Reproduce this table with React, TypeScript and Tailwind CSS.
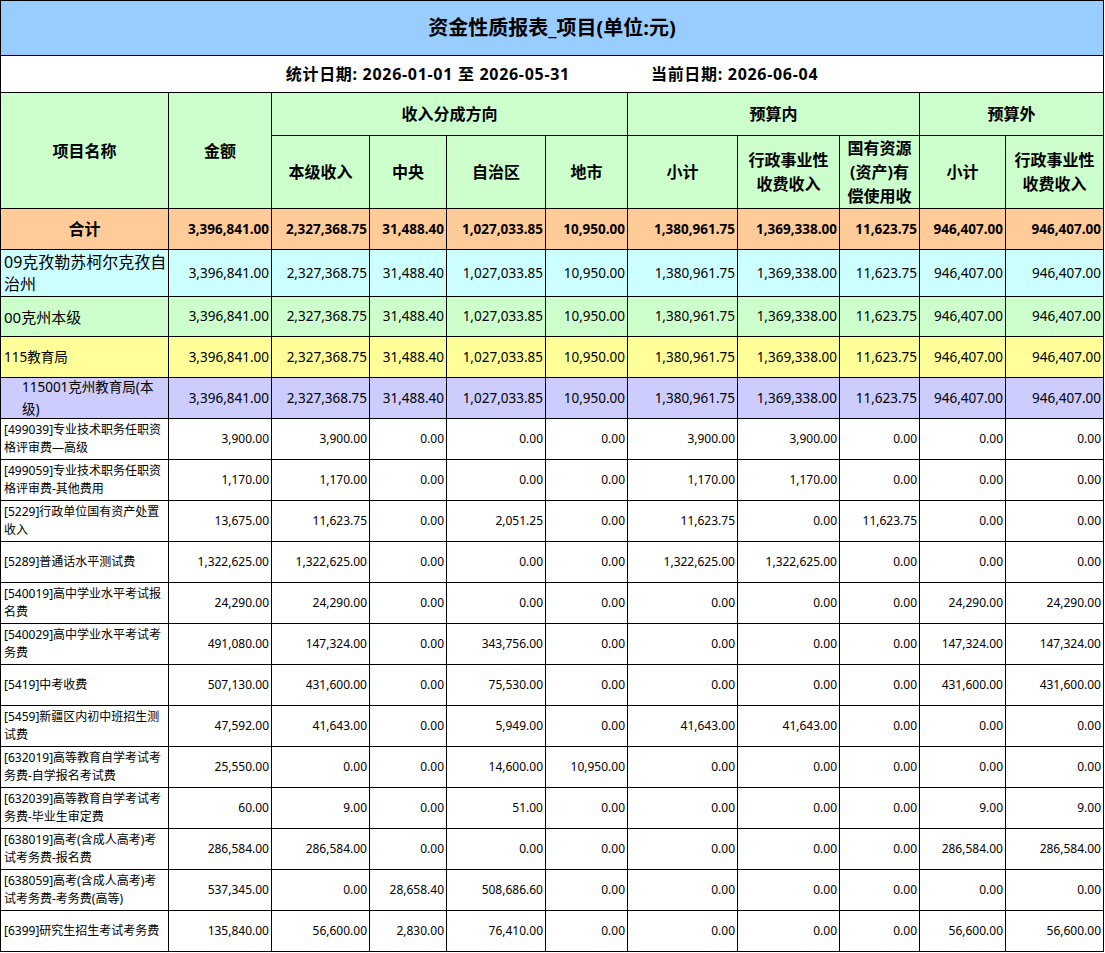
import React from "react";

type Level = {
  name: string[];
  bg: string;
  size: string;
  indent?: boolean;
};

const totals = [
  "3,396,841.00",
  "2,327,368.75",
  "31,488.40",
  "1,027,033.85",
  "10,950.00",
  "1,380,961.75",
  "1,369,338.00",
  "11,623.75",
  "946,407.00",
  "946,407.00",
];

const levels: Level[] = [
  { name: ["09克孜勒苏柯尔克孜自", "治州"], bg: "bg-[#ccffff]", size: "text-[16px]" },
  { name: ["00克州本级"], bg: "bg-[#ccffcc]", size: "text-[15px]" },
  { name: ["115教育局"], bg: "bg-[#ffff99]", size: "text-[13.5px]" },
  { name: ["115001克州教育局(本", "级)"], bg: "bg-[#ccccff]", size: "text-[13.5px]", indent: true },
];

const details: { name: string[]; values: string[] }[] = [
  {
    name: ["[499039]专业技术职务任职资", "格评审费—高级"],
    values: ["3,900.00", "3,900.00", "0.00", "0.00", "0.00", "3,900.00", "3,900.00", "0.00", "0.00", "0.00"],
  },
  {
    name: ["[499059]专业技术职务任职资", "格评审费-其他费用"],
    values: ["1,170.00", "1,170.00", "0.00", "0.00", "0.00", "1,170.00", "1,170.00", "0.00", "0.00", "0.00"],
  },
  {
    name: ["[5229]行政单位国有资产处置", "收入"],
    values: ["13,675.00", "11,623.75", "0.00", "2,051.25", "0.00", "11,623.75", "0.00", "11,623.75", "0.00", "0.00"],
  },
  {
    name: ["[5289]普通话水平测试费"],
    values: ["1,322,625.00", "1,322,625.00", "0.00", "0.00", "0.00", "1,322,625.00", "1,322,625.00", "0.00", "0.00", "0.00"],
  },
  {
    name: ["[540019]高中学业水平考试报", "名费"],
    values: ["24,290.00", "24,290.00", "0.00", "0.00", "0.00", "0.00", "0.00", "0.00", "24,290.00", "24,290.00"],
  },
  {
    name: ["[540029]高中学业水平考试考", "务费"],
    values: ["491,080.00", "147,324.00", "0.00", "343,756.00", "0.00", "0.00", "0.00", "0.00", "147,324.00", "147,324.00"],
  },
  {
    name: ["[5419]中考收费"],
    values: ["507,130.00", "431,600.00", "0.00", "75,530.00", "0.00", "0.00", "0.00", "0.00", "431,600.00", "431,600.00"],
  },
  {
    name: ["[5459]新疆区内初中班招生测", "试费"],
    values: ["47,592.00", "41,643.00", "0.00", "5,949.00", "0.00", "41,643.00", "41,643.00", "0.00", "0.00", "0.00"],
  },
  {
    name: ["[632019]高等教育自学考试考", "务费-自学报名考试费"],
    values: ["25,550.00", "0.00", "0.00", "14,600.00", "10,950.00", "0.00", "0.00", "0.00", "0.00", "0.00"],
  },
  {
    name: ["[632039]高等教育自学考试考", "务费-毕业生审定费"],
    values: ["60.00", "9.00", "0.00", "51.00", "0.00", "0.00", "0.00", "0.00", "9.00", "9.00"],
  },
  {
    name: ["[638019]高考(含成人高考)考", "试考务费-报名费"],
    values: ["286,584.00", "286,584.00", "0.00", "0.00", "0.00", "0.00", "0.00", "0.00", "286,584.00", "286,584.00"],
  },
  {
    name: ["[638059]高考(含成人高考)考", "试考务费-考务费(高等)"],
    values: ["537,345.00", "0.00", "28,658.40", "508,686.60", "0.00", "0.00", "0.00", "0.00", "0.00", "0.00"],
  },
  {
    name: ["[6399]研究生招生考试考务费"],
    values: ["135,840.00", "56,600.00", "2,830.00", "76,410.00", "0.00", "0.00", "0.00", "0.00", "56,600.00", "56,600.00"],
  },
];

function Lines({ lines }: { lines: string[] }) {
  return (
    <span className="whitespace-nowrap">
      {lines.map((l, i) => (
        <React.Fragment key={i}>
          {i > 0 && <br />}
          {l}
        </React.Fragment>
      ))}
    </span>
  );
}

function Head({ children, className = "" }: { children: React.ReactNode; className?: string }) {
  return (
    <div className={`bg-[#ccffcc] flex items-center justify-center text-center text-[16px] leading-[24px] font-bold overflow-hidden ${className}`}>
      {children}
    </div>
  );
}

function Num({ value, className = "" }: { value: string; className?: string }) {
  return <div className={`flex items-center justify-end pr-[2px] whitespace-nowrap ${className}`}>{value}</div>;
}

export default function App() {
  return (
    <div className="bg-white text-black font-['Noto_Sans','Noto_Sans_CJK_SC',sans-serif]">
      <div className="w-[1104px] grid grid-cols-[167px_102px_97px_76px_98px_81px_109px_101px_79px_85px_97px] grid-rows-[54px_36px_42px_72px_40px_46px_39px_40px_40px_repeat(13,40px)] gap-px bg-black border border-black">
        {/* title */}
        <div className="col-span-11 bg-[#99ccff] flex items-center justify-center text-[20px] font-bold">
          资金性质报表_项目(单位:元)
        </div>
        <div className="col-span-11 bg-white flex items-center justify-center gap-[81px] text-[16px] font-bold tracking-[0.7px]">
          <span>统计日期: 2026-01-01 至 2026-05-31</span>
          <span>当前日期: 2026-06-04</span>
        </div>

        {/* header */}
        <Head className="row-span-2">项目名称</Head>
        <Head className="row-span-2">金额</Head>
        <Head className="col-span-4">收入分成方向</Head>
        <Head className="col-span-3">预算内</Head>
        <Head className="col-span-2">预算外</Head>
        <Head>本级收入</Head>
        <Head>中央</Head>
        <Head>自治区</Head>
        <Head>地市</Head>
        <Head>小计</Head>
        <Head>
          <Lines lines={["行政事业性", "收费收入"]} />
        </Head>
        <Head className="items-start">
          <Lines lines={["国有资源", "(资产)有", "偿使用收"]} />
        </Head>
        <Head>小计</Head>
        <Head>
          <Lines lines={["行政事业性", "收费收入"]} />
        </Head>

        {/* total row */}
        <div className="bg-[#ffcc99] flex items-center justify-center text-[16px] font-bold">合计</div>
        {totals.map((v, i) => (
          <Num key={i} value={v} className="bg-[#ffcc99] text-[13.5px] font-bold" />
        ))}

        {/* unit levels */}
        {levels.map((lv) => (
          <React.Fragment key={lv.name.join("")}>
            <div className={`${lv.bg} ${lv.size} flex items-center leading-[22px] ${lv.indent ? "pl-[21px]" : "pl-[3px]"}`}>
              <Lines lines={lv.name} />
            </div>
            {totals.map((v, i) => (
              <Num key={i} value={v} className={`${lv.bg} text-[13.5px]`} />
            ))}
          </React.Fragment>
        ))}

        {/* items */}
        {details.map((row) => (
          <React.Fragment key={row.name.join("")}>
            <div className="bg-white flex items-center pl-[3px] text-[12px] leading-[18px]">
              <Lines lines={row.name} />
            </div>
            {row.values.map((v, i) => (
              <Num key={i} value={v} className="bg-white text-[12px]" />
            ))}
          </React.Fragment>
        ))}
      </div>
    </div>
  );
}
